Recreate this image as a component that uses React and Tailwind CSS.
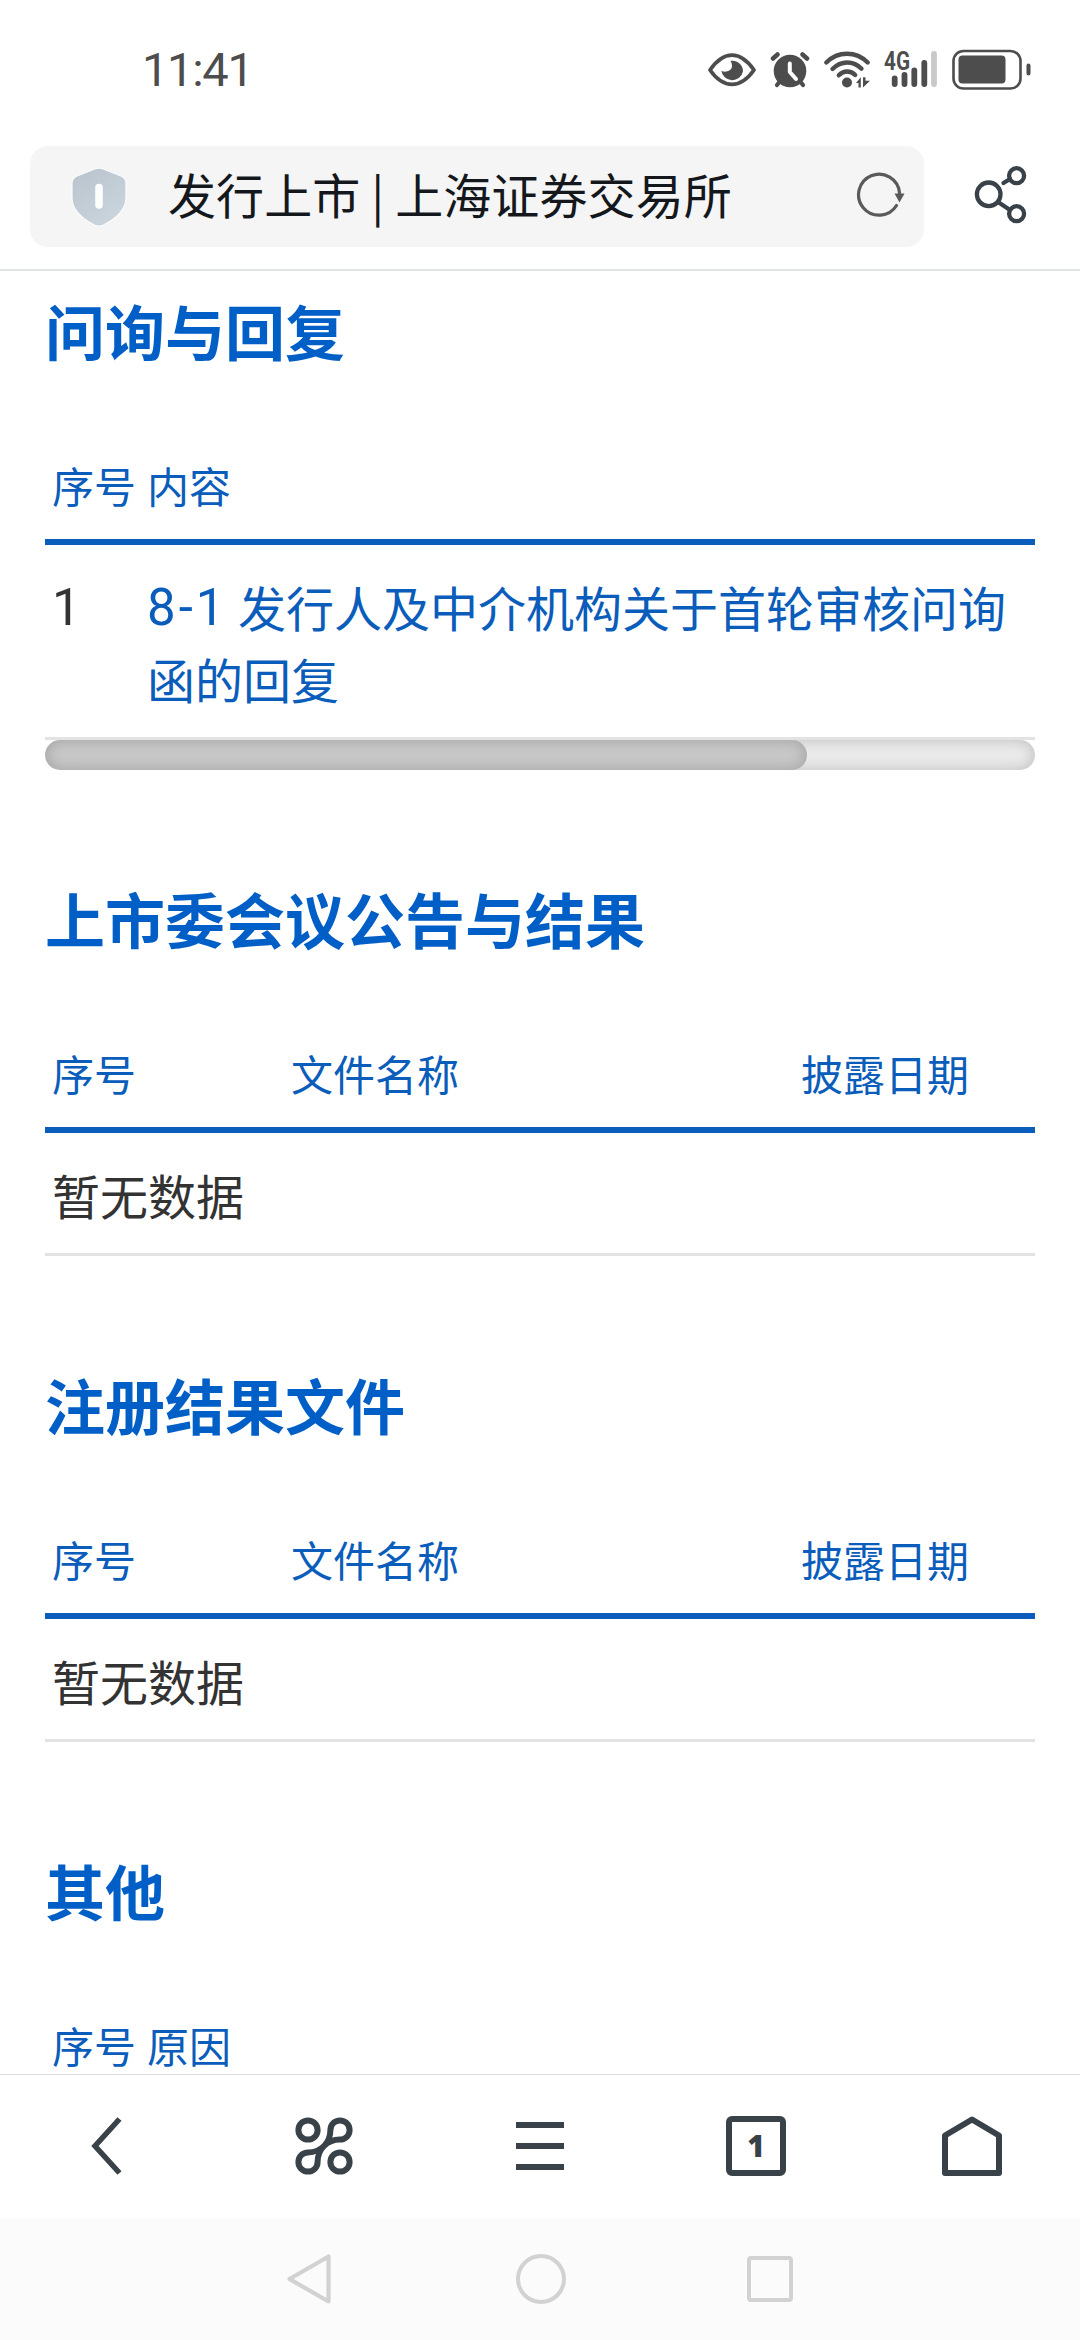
import React from 'react';

const sections = [
  {
    title: '问询与回复',
    columns: [
      { label: '序号', width: 'w-[95px]' },
      { label: '内容', width: 'flex-1' },
    ],
    rows: [{ no: '1', prefix: '8-1', text: '发行人及中介机构关于首轮审核问询函的回复' }],
    scrollable: true,
  },
  {
    title: '上市委会议公告与结果',
    columns: [
      { label: '序号', width: 'w-[239px]' },
      { label: '文件名称', width: 'w-[510px]' },
      { label: '披露日期', width: 'flex-1' },
    ],
    rows: [],
  },
  {
    title: '注册结果文件',
    columns: [
      { label: '序号', width: 'w-[239px]' },
      { label: '文件名称', width: 'w-[510px]' },
      { label: '披露日期', width: 'flex-1' },
    ],
    rows: [],
  },
  {
    title: '其他',
    columns: [
      { label: '序号', width: 'w-[95px]' },
      { label: '原因', width: 'flex-1' },
    ],
    rows: [],
  },
];

const StatusBar = () => (
  <div className="flex h-[140px] shrink-0 items-center justify-between pl-[142px] pr-[49px] text-[#4d4d4d]">
    <span className="pb-[2px] font-['Roboto',sans-serif] text-[47px] leading-none tracking-[-1.3px]">11:41</span>
    <div className="flex items-center">
      {/* eye comfort */}
      <svg width="50" height="40" viewBox="0 0 50 40" className="mr-[13px]">
        <path d="M3 20C10 10 17 5.2 25 5.2S40 10 47 20C40 30 33 34.300 25 34.300S10 30 3 20Z" fill="none" stroke="currentColor" strokeWidth="3.8" strokeLinejoin="round" />
        <path d="M23.500 11C30 10 36 14.500 36 21.300A11 11 0 0 1 14.300 20.500C17 23 24.500 21.500 25 16.500C25.200 14 24.500 12.500 23.500 11Z" fill="currentColor" />
      </svg>
      {/* alarm */}
      <svg width="40" height="40" viewBox="0 0 40 40" className="mr-[13px]">
        <g stroke="currentColor" strokeLinecap="round">
          <path d="M3 8.500L7.500 4.500M37 8.500L32.500 4.500" strokeWidth="4.500" />
          <path d="M7 35L11 30M33 35L29 30" strokeWidth="4.200" />
        </g>
        <circle cx="20" cy="21" r="16.300" fill="currentColor" />
        <path d="M19.800 13.500V22L26 29" fill="none" stroke="#fff" strokeWidth="4" strokeLinecap="round" strokeLinejoin="round" />
      </svg>
      {/* wifi */}
      <svg width="48" height="40" viewBox="0 0 48 40" className="mr-[13px]">
        <g fill="none" stroke="currentColor" strokeWidth="4.400" strokeLinecap="round">
          <path d="M3.300 12.500C15 .8 33 .8 44.700 12.500" />
          <path d="M9.500 19C18 10.300 30.500 10.300 38.500 18.700" />
          <path d="M15.800 25.300C20.500 20.300 27.500 20.300 32.200 25" />
        </g>
        <circle cx="24" cy="32.500" r="5" fill="currentColor" />
        <path d="M33 33L37.800 27.300V37.500H35.500V33ZM40 27.300V37.500L47 30.800H42.500V27.300Z" fill="currentColor" />
      </svg>
      {/* signal */}
      <svg width="54" height="56" viewBox="0 -8 54 56" className="mr-[14px]">
        <text x="0" y="20" textLength="26" lengthAdjust="spacingAndGlyphs" fill="currentColor" fontFamily="Roboto, sans-serif" fontWeight="700" fontSize="25">4G</text>
        <g strokeWidth="5.800" strokeLinecap="round">
          <path d="M10.700 28.500V34M20.500 25V34M30.300 20.500V34M40.300 13V34" stroke="currentColor" />
          <path d="M50 4V34" stroke="#c9c9c9" />
        </g>
      </svg>
      {/* battery */}
      <svg width="79" height="42" viewBox="0 0 79 42">
        <rect x="1.500" y="2" width="67" height="37.500" rx="10" fill="none" stroke="currentColor" strokeWidth="2.600" />
        <rect x="6.500" y="6.500" width="47" height="28" rx="4" fill="currentColor" />
        <path d="M76.500 16.500V24.500" stroke="currentColor" strokeWidth="4" strokeLinecap="round" />
      </svg>
    </div>
  </div>
);

const AddressBar = () => (
  <div className="flex shrink-0 items-start border-b-2 border-[#e0e4e4] pt-[6px] pb-[22px] pl-[30px]">
    <div className="flex h-[101px] w-[894px] items-center rounded-[18px] bg-[#f5f5f5] pl-[41px] pr-[18px]">
      <svg width="56" height="60" viewBox="0 0 56 60">
        <defs>
          <linearGradient id="shield" x1="0" y1="0" x2="0.6" y2="1">
            <stop offset="0" stopColor="#b8c3cd" />
            <stop offset="1" stopColor="#cad4dc" />
          </linearGradient>
        </defs>
        <path d="M24.500 1.800Q28 .4 31.500 1.800L50 9Q55 11.300 55 16V31C55 43 44 52.500 32 58.300Q28 60 24 58.300C12 52.500 1 43 1 31V16Q1 11.300 6 9Z" fill="url(#shield)" stroke="#fafcfe" strokeWidth="1.200" />
        <path d="M28 20.500V38" stroke="#fff" strokeWidth="7.500" strokeLinecap="round" />
      </svg>
      <span className="ml-[41px] flex-1 whitespace-nowrap pb-[7px] text-[48px] leading-[60px] tracking-[0.1px] text-[#14181c]">发行上市 | 上海证券交易所</span>
      <svg width="50" height="48" viewBox="0 0 50 48" className="mb-[3px]">
        <path d="M43.500 22A20.500 20.500 0 1 0 40.500 34.500" fill="none" stroke="#5a5a5a" strokeWidth="3.200" strokeLinecap="round" />
        <path d="M38.500 22.500H48.500L43.500 31.500Z" fill="#5a5a5a" />
      </svg>
    </div>
    <svg width="54" height="60" viewBox="0 0 54 60" className="mt-[19px] ml-[50px]" fill="none" stroke="#384248" strokeWidth="4.300">
      <circle cx="14.700" cy="29.300" r="11.800" />
      <circle cx="42.600" cy="10.700" r="7.500" />
      <circle cx="42.600" cy="48.700" r="7.500" />
      <path d="M36 14L29.500 18" strokeLinecap="round" />
      <path d="M24 37L36 45" />
    </svg>
  </div>
);

const Section = ({ title, columns, rows, scrollable, last }) => (
  <section className="mb-[102px]">
    <h2 className="mb-[53px] pt-px text-[60px] font-bold leading-[90px] text-[#005fc6]">{title}</h2>
    <div className="flex border-b-[6px] border-[#0a5dbb] px-[7px] pt-[25px] pb-[23px] text-[42px] leading-[63px] text-[#0a5dbb]">
      {columns.map((col) => (
        <div key={col.label} className={col.width}>{col.label}</div>
      ))}
    </div>
    {rows.map((row) => (
      <div key={row.no} className="flex border-b-[3px] border-[#e3e3e3] px-[7px] pt-[25px] pb-[23px] text-[48px] leading-[72px]">
        <div className="w-[95px] pt-[3px] font-['Roboto',sans-serif] text-[51px] leading-[69px] text-[#333]">{row.no}</div>
        <a className="flex-1 text-[#0a5dbb]">
          <span className="inline-block h-[72px] w-[91px] pt-[4px] align-top font-['Roboto',sans-serif] text-[51px] leading-[68px] tracking-[3px]">{row.prefix}</span>
          {row.text}
        </a>
      </div>
    ))}
    {rows.length === 0 && !last && (
      <div className="border-b-[3px] border-[#e3e3e3] px-[7px] pt-[25px] pb-[23px] text-[48px] leading-[72px] text-[#333]">暂无数据</div>
    )}
    {scrollable && (
      <div className="h-[30px] overflow-hidden rounded-[15px] bg-[#ebebeb] shadow-[inset_0_0_15px_rgba(0,0,0,0.2)]">
        <div className="h-full w-[762px] rounded-[15px] bg-[#c8c8c8] shadow-[inset_0_0_15px_rgba(0,0,0,0.2)]" />
      </div>
    )}
  </section>
);

const Toolbar = () => (
  <div className="grid h-[144px] shrink-0 grid-cols-5 items-center justify-items-center border-t border-[#dcdcdc] pb-px text-[#384248]">
    <svg width="60" height="60" viewBox="0 0 60 60" fill="none" stroke="currentColor" strokeWidth="5.500">
      <path d="M41.500 3L17 30L41.500 57" />
    </svg>
    <svg width="60" height="60" viewBox="0 0 60 60" fill="none" stroke="currentColor" strokeWidth="6">
      <circle cx="14" cy="14" r="9.600" />
      <circle cx="46" cy="46" r="9.600" />
      <path d="M36.400 14A9.600 9.600 0 1 1 46 23.600C38 23.600 34 26 30 30S23.600 38 23.600 46A9.600 9.600 0 1 1 14 36.400C22 36.400 26 34 30 30S36.400 22 36.400 14Z" />
    </svg>
    <svg width="60" height="60" viewBox="0 0 60 60" stroke="currentColor" strokeWidth="6">
      <path d="M6 9H54M6 30H54M6 51H54" />
    </svg>
    <div className="flex h-[60px] w-[60px] items-center justify-center rounded-[6px] border-[6px] border-current font-['Noto_Sans',sans-serif] text-[30px] font-black leading-none">
      1
    </div>
    <svg width="60" height="60" viewBox="0 0 60 60" fill="none" stroke="currentColor" strokeWidth="6" strokeLinejoin="round">
      <path d="M3 19.500L30 3.500L57 19.500V57H3Z" />
    </svg>
  </div>
);

const SystemNav = () => (
  <div className="flex h-[122px] shrink-0 items-center justify-center gap-[179px] bg-[#fbfbfb]">
    <svg width="52" height="52" viewBox="0 0 52 52" fill="none" stroke="#d2d2d2" strokeWidth="4.200" strokeLinejoin="round">
      <path d="M43.500 3.500V48.500L4.500 26Z" />
    </svg>
    <div className="h-[50px] w-[50px] rounded-full border-[4.5px] border-[#d2d2d2]" />
    <div className="mx-[2px] h-[46px] w-[46px] rounded-[4px] border-[4.5px] border-[#d2d2d2]" />
  </div>
);

const App = () => {
  return (
    <div className="flex h-[2340px] w-[1080px] flex-col overflow-hidden bg-white font-['Noto_Sans_CJK_SC',sans-serif]">
      <StatusBar />
      <AddressBar />
      <main className="min-h-0 flex-1 overflow-hidden px-[45px] pt-[13px]">
        {sections.map((section, i) => (
          <Section key={section.title} {...section} last={i === sections.length - 1} />
        ))}
      </main>
      <Toolbar />
      <SystemNav />
    </div>
  );
};

export default App;
